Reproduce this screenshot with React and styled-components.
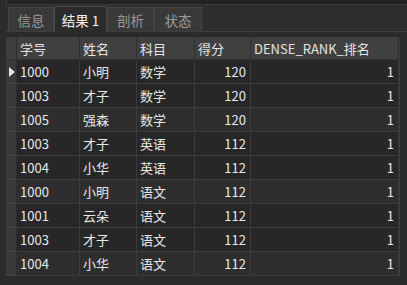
import React from 'react'
import styled, { createGlobalStyle } from 'styled-components'

const GlobalStyle = createGlobalStyle`
  html, body {
    margin: 0;
    padding: 0;
    background: #2b2b2b;
  }
  body {
    font-family: "Noto Sans CJK SC", "Noto Sans", sans-serif;
    font-size: 13px;
    overflow: hidden;
  }
`

const Page = styled.div`
  width: 407px;
  height: 285px;
  background: #2b2b2b;
  display: flex;
  flex-direction: column;
  overflow: hidden;
`

const TopStrip = styled.div`
  height: 4px;
  background: #222;
  border-bottom: 1px solid #3a3a3a;
  margin-left: 6px;
  border-left: 1px solid #3a3a3a;
`

const TabBar = styled.div`
  height: 26px;
  display: flex;
  align-items: flex-end;
  padding-left: 2px;
  margin-left: 6px;
  background: #2d2d2d;
  border-bottom: 1px solid #3e3e3e;
`

const Tab = styled.div`
  box-sizing: border-box;
  width: ${p => p.$w}px;
  height: ${p => (p.$active ? 26 : 24)}px;
  display: flex;
  align-items: center;
  justify-content: center;
  background: ${p => (p.$active ? '#2b2b2b' : '#393939')};
  border: 1px solid ${p => (p.$active ? '#4a4a4a' : '#444')};
  border-bottom: none;
  color: ${p => (p.$active ? '#f2f2f2' : '#9a9a9a')};
  font-size: 13.5px;
  margin-bottom: ${p => (p.$active ? '-1px' : '0')};
  position: relative;
`

const Body = styled.div`
  flex: 1;
  display: flex;
  padding-top: 5px;
  padding-left: 6px;
`

const Grid = styled.div`
  display: grid;
  grid-template-columns: 11px 63px 57px 58px 56px 148px;
  grid-auto-rows: 24px;
  grid-template-rows: 23px;
  width: 393px;
  align-self: flex-start;
  border-right: 1px solid #3c3c3c;
`

const HeadCell = styled.div`
  box-sizing: border-box;
  background: #404040;
  color: #e4e4e4;
  border-right: 1px solid #303030;
  border-bottom: 1px solid #333;
  padding: 0 3px;
  display: flex;
  align-items: center;
  white-space: nowrap;
  overflow: hidden;
`

const RowHead = styled.div`
  box-sizing: border-box;
  background: ${p => (p.$corner ? '#3e3e3e' : '#3a3a3a')};
  border-right: 1px solid #2e2e2e;
  border-bottom: 1px solid ${p => (p.$corner ? '#333' : '#444')};
  display: flex;
  align-items: center;
  justify-content: center;
`

const Cell = styled.div`
  box-sizing: border-box;
  background: ${p => (p.$alt ? '#2e2e2e' : '#272727')};
  color: #e8e8e8;
  border-right: 1px solid #3b3b3b;
  border-bottom: 1px solid #3b3b3b;
  padding: 0 4px 0 3px;
  display: flex;
  align-items: center;
  justify-content: ${p => (p.$num ? 'flex-end' : 'flex-start')};
  white-space: nowrap;
  font-size: 13px;
`

const Arrow = styled.div`
  width: 0;
  height: 0;
  border-top: 5px solid transparent;
  border-bottom: 5px solid transparent;
  border-left: 6px solid #e6e6e6;
  margin-left: 1px;
`

const tabs = [
  { label: '信息', w: 46 },
  { label: '结果 1', w: 53, active: true },
  { label: '剖析', w: 47 },
  { label: '状态', w: 48 },
]

const columns = ['学号', '姓名', '科目', '得分', 'DENSE_RANK_排名']

const rows = [
  ['1000', '小明', '数学', '120', '1'],
  ['1003', '才子', '数学', '120', '1'],
  ['1005', '强森', '数学', '120', '1'],
  ['1003', '才子', '英语', '112', '1'],
  ['1004', '小华', '英语', '112', '1'],
  ['1000', '小明', '语文', '112', '1'],
  ['1001', '云朵', '语文', '112', '1'],
  ['1003', '才子', '语文', '112', '1'],
  ['1004', '小华', '语文', '112', '1'],
]

const App = () => (
  <Page>
    <GlobalStyle />
    <TopStrip />
    <TabBar>
      {tabs.map(t => (
        <Tab key={t.label} $w={t.w} $active={t.active}>{t.label}</Tab>
      ))}
    </TabBar>
    <Body>
      <Grid>
        <RowHead $corner />
        {columns.map(c => <HeadCell key={c}>{c}</HeadCell>)}
        {rows.map((r, i) => (
          <React.Fragment key={i}>
            <RowHead>{i === 0 && <Arrow />}</RowHead>
            {r.map((v, j) => (
              <Cell key={j} $num={j >= 3} $alt={i % 3 === 2}>{v}</Cell>
            ))}
          </React.Fragment>
        ))}
      </Grid>
    </Body>
  </Page>
)

export default App
